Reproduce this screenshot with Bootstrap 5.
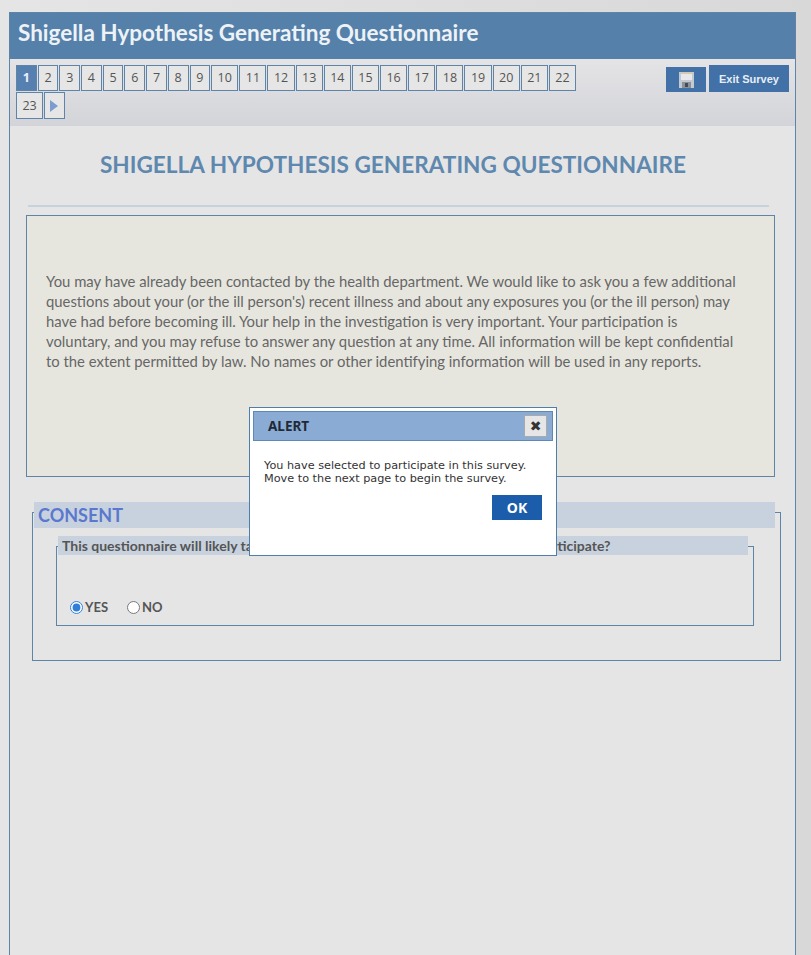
<!DOCTYPE html>
<html lang="en">
<head>
    <meta charset="UTF-8">
    <meta name="viewport" content="width=device-width, initial-scale=1.0">
    <title>Shigella Hypothesis Generating Questionnaire</title>
    <link href="https://cdn.jsdelivr.net/npm/bootstrap@5.3.0/dist/css/bootstrap.min.css" rel="stylesheet">
    <script src="https://cdn.jsdelivr.net/npm/bootstrap@5.3.0/dist/js/bootstrap.bundle.min.js"></script>
    <style>
        html, body { height: 955px; overflow: hidden; }
        body { background: linear-gradient(to right, #e5e5e5, #d8d8d8); font-family: "Lato", sans-serif; position: relative; }
        .survey-shell { margin: 12px 15px 0 9px; height: 943px; background: #e5e5e6; border: 1px solid #5e84a8; border-bottom: 0; }
        .survey-head { height: 46px; background: #5580a9; color: #edf2f7; font: 700 22.5px/39px "Lato", sans-serif; padding-left: 8px; }
        .survey-bar { height: 67px; padding: 6px 6px 0 6px; background: linear-gradient(#e4e4e6, #d3d4d9); }
        .pager-wrap { width: 565px; gap: 1px; }
        .pager-btn { height: 26px; width: 20.7px; padding: 0; border: 1px solid #5e84a8; background: #e6e6e6; color: #555; font: 400 12.5px/24px "Open Sans", sans-serif; text-align: center; }
        .pager-wide { width: 27.15px; }
        .pager-on { background: #5580b0; color: #eef; font-weight: 700; }
        .pager-next { height: 27px; line-height: 26px; }
        .tool-btn { background: #4271a8; color: #e8eef5; border: 0; font: 700 11px/27px "Liberation Sans", sans-serif; }
        .tool-save { width: 40px; height: 25px; margin-top: 2px; margin-right: 3px; }
        .tool-exit { width: 80px; height: 27px; }
        .survey-title { margin: 0; padding: 24px 19px 0 0; height: 79px; color: #5f88af; font: 700 22.6px/30px "Lato", sans-serif; text-align: center; }
        .title-rule { height: 2px; margin: 0 26px 0 18px; background: #c5d3df; }
        .intro-box { margin: 8px 20px 0 16px; height: 262px; padding: 55px 36px 0 19px; background: #e6e6df; border: 1px solid #5e84a8; color: #666; font-size: 14.85px; line-height: 20px; }
        .consent-wrap { margin: 35px 14px 0 22px; }
        .consent-frame { border: 1px solid #5e84a8; margin-top: 10px; height: 149px; padding: 0 26px 0 23px; }
        .consent-head { margin: -11px -21px 0 -22px; height: 26px; background: #c8d2de; color: #5b78cf; font: 700 18px/27px "Lato", sans-serif; padding-left: 4px; }
        .question-frame { border: 1px solid #5e84a8; margin-top: 18px; height: 80px; padding: 0 5px 0 1px; }
        .question-head { margin-top: -11px; height: 19px; background: #c8d2de; color: #555; font: 700 14px/19px "Lato", sans-serif; padding-left: 4px; }
        .answer-row { margin: 43px 0 0 12px; gap: 19px; color: #555; font: 700 13px/18px "Lato", sans-serif; }
        .answer-row input { margin: 0 2px 0 0; width: 13px; height: 13px; accent-color: #2f7fd9; }
        .alert-box { position: absolute; left: 249px; top: 407px; width: 308px; height: 149px; padding: 3px; background: #fff; border: 1px solid #4f7eab; }
        .alert-head { height: 30px; background: #8aabd3; border: 1px solid #5f88b5; padding: 0 5px 0 14px; color: #1f2a36; font: 700 13.5px/28px "Noto Sans", sans-serif; }
        .alert-close { width: 23px; height: 22px; padding: 0; background: #e6e6e6; border: 1px solid #aaa; color: #333; font: 700 14px/20px "DejaVu Sans", sans-serif; }
        .alert-body { padding: 19px 11px 0; color: #333; font: 400 11.25px/12.5px "DejaVu Sans", sans-serif; }
        .alert-ok { width: 50px; height: 25px; margin-top: 10px; padding: 0; background: #1b5dab; color: #fff; border: 0; font: 700 14px/25px "Noto Sans", sans-serif; }
    </style>
</head>
<body>
    <div class="survey-shell">
        <div class="survey-head">Shigella Hypothesis Generating Questionnaire</div>

        <div class="survey-bar d-flex justify-content-between align-items-start">
            <div class="pager-wrap d-flex flex-wrap">
                <div class="pager-btn pager-on">1</div>
                <div class="pager-btn">2</div>
                <div class="pager-btn">3</div>
                <div class="pager-btn">4</div>
                <div class="pager-btn">5</div>
                <div class="pager-btn">6</div>
                <div class="pager-btn">7</div>
                <div class="pager-btn">8</div>
                <div class="pager-btn">9</div>
                <div class="pager-btn pager-wide">10</div>
                <div class="pager-btn pager-wide">11</div>
                <div class="pager-btn pager-wide">12</div>
                <div class="pager-btn pager-wide">13</div>
                <div class="pager-btn pager-wide">14</div>
                <div class="pager-btn pager-wide">15</div>
                <div class="pager-btn pager-wide">16</div>
                <div class="pager-btn pager-wide">17</div>
                <div class="pager-btn pager-wide">18</div>
                <div class="pager-btn pager-wide">19</div>
                <div class="pager-btn pager-wide">20</div>
                <div class="pager-btn pager-wide">21</div>
                <div class="pager-btn pager-wide">22</div>
                <div class="pager-btn pager-wide pager-next">23</div>
                <div class="pager-btn pager-next d-flex align-items-center justify-content-center">
                    <svg width="8" height="12" viewBox="0 0 8 12"><path d="M0 0L8 6L0 12Z" fill="#7c9cd0"/></svg>
                </div>
            </div>
            <div class="d-flex">
                <button class="tool-btn tool-save d-flex align-items-center justify-content-center">
                    <svg width="15" height="16" viewBox="0 0 15 16"><path d="M0 0H15V16H0Z" fill="#c3c9d0"/><path d="M2 1H13V8H2Z" fill="#e6e8eb"/><path d="M2 1H13V2H2Z" fill="#e6c98a"/><path d="M3 10H12V16H3Z" fill="#8a9198"/><path d="M6 11H9V15H6Z" fill="#444c56"/></svg>
                </button>
                <button class="tool-btn tool-exit">Exit Survey</button>
            </div>
        </div>

        <h1 class="survey-title">SHIGELLA HYPOTHESIS GENERATING QUESTIONNAIRE</h1>
        <div class="title-rule"></div>

        <div class="intro-box">You may have already been contacted by the health department. We would like to ask you a few additional questions about your (or the ill person's) recent illness and about any exposures you (or the ill person) may have had before becoming ill. Your help in the investigation is very important. Your participation is voluntary, and you may refuse to answer any question at any time. All information will be kept confidential to the extent permitted by law. No names or other identifying information will be used in any reports.</div>

        <div class="consent-wrap">
            <div class="consent-frame">
                <div class="consent-head">CONSENT</div>
                <div class="question-frame">
                    <div class="question-head">This questionnaire will likely take 30 minutes to complete. Would you like to participate?</div>
                    <div class="answer-row d-flex">
                        <label class="d-flex align-items-center"><input type="radio" name="consent" checked>YES</label>
                        <label class="d-flex align-items-center"><input type="radio" name="consent">NO</label>
                    </div>
                </div>
            </div>
        </div>
    </div>

    <div class="alert-box">
        <div class="alert-head d-flex justify-content-between align-items-center">
            <span>ALERT</span>
            <button class="alert-close">✖</button>
        </div>
        <div class="alert-body">
            You have selected to participate in this survey.<br>Move to the next page to begin the survey.
            <div class="d-flex justify-content-end"><button class="alert-ok">OK</button></div>
        </div>
    </div>
</body>
</html>
